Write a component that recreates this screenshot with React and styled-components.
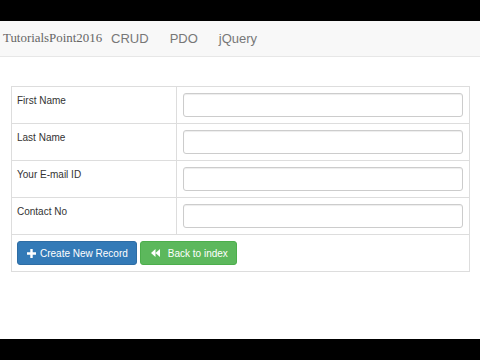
import React from 'react'
import styled, { createGlobalStyle } from 'styled-components';

const GlobalStyle = createGlobalStyle`
    * { box-sizing: border-box; }
    body {
        margin: 0;
        background: #000;
        font-family: "Liberation Sans", Arial, sans-serif;
    }
`

const Screen = styled.div`
    margin: 21px 0;
    height: 318px;
    background: #fff;
    overflow: hidden;
`

const Navbar = styled.nav`
    display: flex;
    align-items: center;
    height: 36px;
    padding-left: 3px;
    background: #f8f8f8;
    border-bottom: 1px solid #e7e7e7;
`

const Brand = styled.a`
    font-family: "Liberation Serif", "DejaVu Serif", serif;
    font-size: 12.9px;
    color: #666;
    margin-right: 9px;
`

const NavLink = styled.a`
    font-size: 13px;
    color: #777;
    margin-right: 21px;
`

const Table = styled.table`
    margin: 29px 0 0 11px;
    width: 459px;
    border-collapse: collapse;
    table-layout: fixed;
`

const Cell = styled.td`
    border: 1px solid #ddd;
    padding: 6px 6px 6px ${({ $left }) => $left || 5}px;
    vertical-align: top;
    font-size: 10px;
    line-height: 14px;
    color: #333;
    width: ${({ $width }) => $width || 'auto'};
`

const Label = styled.span`
    display: block;
    padding-top: 1px;
`

const Input = styled.input`
    display: block;
    width: 100%;
    height: 24px;
    border: 1px solid #ccc;
    border-radius: 3px;
    box-shadow: inset 0 1px 1px rgba(0, 0, 0, .075);
    outline: none;
`

const Actions = styled.div`
    display: flex;
    gap: 3px;
`

const Button = styled.button`
    display: flex;
    align-items: center;
    height: 24px;
    padding: 0 8px 0 ${({ $left }) => $left || 9}px;
    gap: ${({ $gap }) => $gap || 4}px;
    border: 1px solid ${({ $green }) => ($green ? '#4cae4c' : '#2e6da4')};
    border-radius: 3px;
    background: ${({ $green }) => ($green ? '#5cb85c' : '#337ab7')};
    color: #fff;
    font-family: "Liberation Sans", Arial, sans-serif;
    font-size: 10px;
`

const PlusIcon = () => (
    <svg width="9" height="9" viewBox="0 0 9 9">
        <path d="M3.3 0h2.4v3.3H9v2.4H5.7V9H3.3V5.7H0V3.3h3.3z" fill="#fff" />
    </svg>
)

const BackIcon = () => (
    <svg width="9" height="8" viewBox="0 0 9 8">
        <path d="M0 4L4.5 0v8zM4.5 4L9 0v8z" fill="#fff" />
    </svg>
)

const fields = ['First Name', 'Last Name', 'Your E-mail ID', 'Contact No']

const App = () => {
    return (
        <Screen>
            <GlobalStyle />
            <Navbar>
                <Brand>TutorialsPoint2016</Brand>
                <NavLink>CRUD</NavLink>
                <NavLink>PDO</NavLink>
                <NavLink>jQuery</NavLink>
            </Navbar>
            <Table>
                <tbody>
                    {fields.map((f) => (
                        <tr key={f}>
                            <Cell $width="165px"><Label>{f}</Label></Cell>
                            <Cell $left={6}><Input type="text" /></Cell>
                        </tr>
                    ))}
                    <tr>
                        <Cell colSpan={2}>
                            <Actions>
                                <Button>
                                    <PlusIcon />
                                    Create New Record
                                </Button>
                                <Button $green $left={10} $gap={8}>
                                    <BackIcon />
                                    Back to index
                                </Button>
                            </Actions>
                        </Cell>
                    </tr>
                </tbody>
            </Table>
        </Screen>
    )
}

export default App;
